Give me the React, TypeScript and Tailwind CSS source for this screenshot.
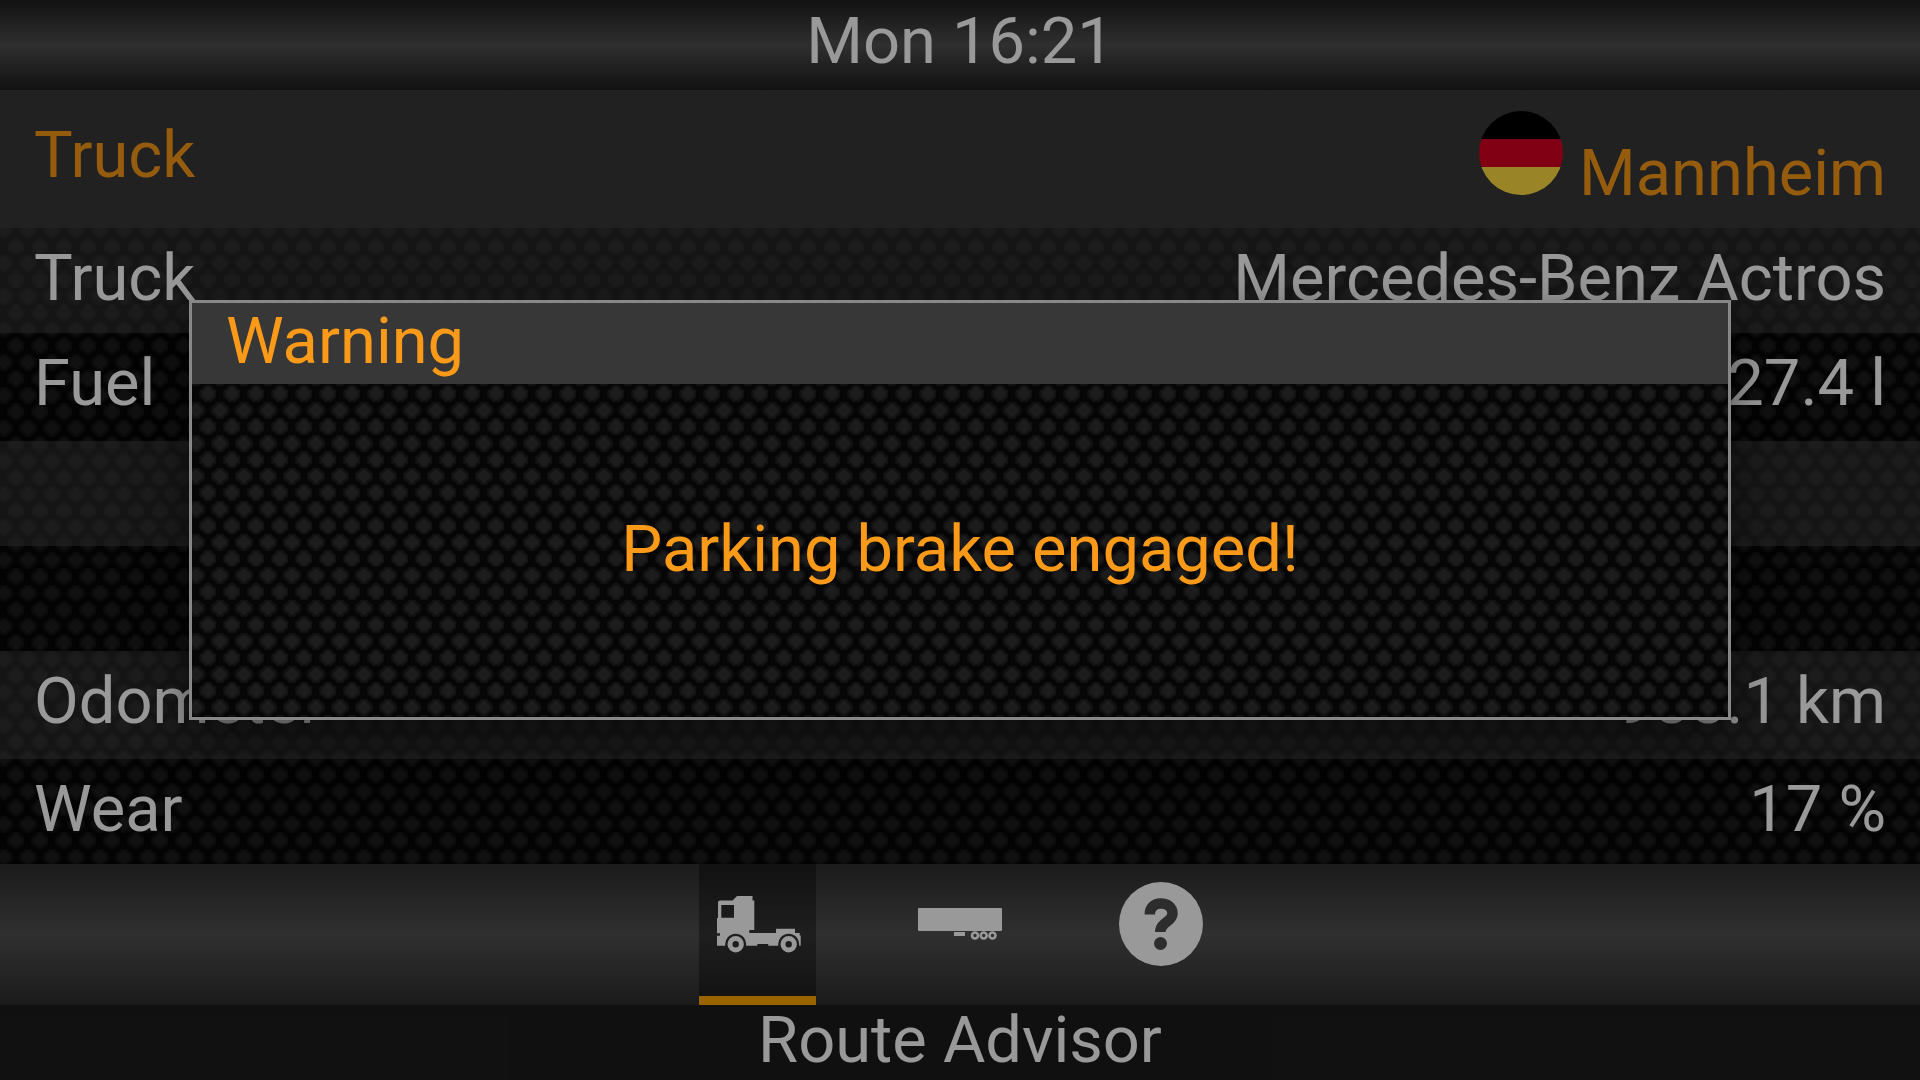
import React from "react";

const TILE =
  "bg-[url('data:image/svg+xml,%3Csvg%20xmlns=%22http://www.w3.org/2000/svg%22%20width=%2224%22%20height=%2233%22%3E%3Crect%20width=%2224%22%20height=%2233%22%20fill=%22%23060606%22/%3E%3Cg%20fill=%22%231c1c1c%22%20stroke=%22%23121212%22%20stroke-width=%222.500%22%20stroke-linejoin=%22round%22%3E%3Cpath%20id=%22d%22%20d=%22M2%200.75h4l2.500%203%203%202v5l-3%202-2.500%203h-4l-2.500-3-3-2v-5l3-2z%22/%3E%3Cuse%20href=%22%23d%22%20x=%2224%22/%3E%3Cuse%20href=%22%23d%22%20x=%2212%22%20y=%2216.5%22/%3E%3C/g%3E%3C/svg%3E')]";

type Row = { label: string; value: string; size: string };

const rows: Row[] = [
  { label: "Truck", value: "Mercedes-Benz Actros", size: "h-[105px]" },
  { label: "Fuel", value: "427.4 l", size: "h-[108px]" },
  { label: "", value: "", size: "h-[105px]" },
  { label: "", value: "", size: "h-[105px]" },
  { label: "Odometer", value: "988.1 km", size: "h-[108px]" },
  { label: "Wear", value: "17 %", size: "h-[105px]" },
];

function Flag() {
  return (
    <svg viewBox="0 0 84 84" className="size-[84px]" role="img" aria-label="Germany">
      <clipPath id="disc">
        <circle cx="42" cy="42" r="42" />
      </clipPath>
      <g clipPath="url(#disc)">
        <path fill="#000" d="M0 0h84v28H0z" />
        <path fill="#d80020" d="M0 28h84v28H0z" />
        <path fill="#ffdc44" d="M0 56h84v28H0z" />
      </g>
    </svg>
  );
}

function TruckIcon() {
  return (
    <svg viewBox="0 0 84 84" className="size-[84px]" fill="#fff" aria-hidden="true">
      <path
        fillRule="evenodd"
        d="M1 20.500q0-2 2-2h12.500l4.500-4.500h15.500v4.500h1.800V48h-5v3H59v-4.300h19V51h4.700v2.500h1V63.700H82.100A10.500 10.500 0 1 0 61.300 63.700H51.300V62h-11v1.700H29.100A10.500 10.500 0 1 0 8.300 63.700H0v-10h3v-2.400H0V36h1zM4.300 23v12.700H17V23z"
      />
      <path fillRule="evenodd" d="M18.700 54a8.200 8.200 0 1 1 0 16.400 8.200 8.200 0 0 1 0-16.400zm0 5a3.200 3.200 0 1 0 0 6.400 3.200 3.200 0 0 0 0-6.400z" />
      <path fillRule="evenodd" d="M71.700 54a8.200 8.200 0 1 1 0 16.400 8.200 8.200 0 0 1 0-16.400zm0 5a3.200 3.200 0 1 0 0 6.400 3.200 3.200 0 0 0 0-6.400z" />
    </svg>
  );
}

function TrailerIcon() {
  return (
    <svg viewBox="0 0 84 84" className="size-[84px]" fill="#fff" aria-hidden="true">
      <rect x="0" y="26" width="84" height="23" rx="1" />
      <rect x="36" y="50" width="11" height="4" />
      <g fill="none" stroke="#fff" strokeWidth="2.600">
        <circle cx="57" cy="53.500" r="3" />
        <circle cx="65.700" cy="53.500" r="3" />
        <circle cx="74.500" cy="53.500" r="3" />
      </g>
    </svg>
  );
}

function HelpIcon() {
  return (
    <svg viewBox="0 0 84 84" className="size-[84px]" aria-hidden="true">
      <circle cx="42" cy="42" r="42" fill="#fff" />
      <path
        fill="none"
        stroke="#4c4c4c"
        strokeWidth="10.500"
        d="M30.800 32.500c0-7 4.500-11 11-11s11.700 3.500 11.700 10c0 8.500-12.200 8.500-12.200 18.500"
      />
      <circle cx="41.500" cy="61.500" r="6.500" fill="#4c4c4c" />
    </svg>
  );
}

export default function App() {
  return (
    <div className="relative flex min-h-screen flex-col bg-[#1c1c1c] font-['Roboto',sans-serif] text-[65px] leading-[76px] text-white">
      <header className="h-[90px] bg-linear-to-b from-[#1f1f1f] via-[#505050] to-[#1d1d1d] pt-[3px] text-center">
        Mon 16:21
      </header>

      <main className={`grow ${TILE}`}>
        <div className="flex h-[138px] items-start justify-between bg-[#373737] px-[34px] text-[#fa9a18]">
          <h1 className="pt-[27px]">Truck</h1>
          <div className="flex items-start gap-4 pt-[21px]">
            <Flag />
            <span className="pt-6">Mannheim</span>
          </div>
        </div>
        <dl>
          {rows.map((row, i) => (
            <div
              key={i}
              className={`flex justify-between px-[34px] pt-3 ${row.size} ${i % 2 === 0 ? "bg-[#505050]/40" : ""}`}
            >
              <dt>{row.label}</dt>
              <dd>{row.value}</dd>
            </div>
          ))}
        </dl>
      </main>

      <nav className="flex h-[141px] justify-center gap-[84px] bg-linear-to-b from-[#2e2e2e] via-[#505050] to-[#2e2e2e] pr-[3px]">
        <button aria-label="Truck" className="flex w-[117px] border-b-9 border-[#ffa500] bg-black/35 pt-[18px] pl-[18px]">
          <TruckIcon />
        </button>
        <button aria-label="Trailer" className="flex w-[117px] pt-[18px] pl-[18px]">
          <TrailerIcon />
        </button>
        <button aria-label="Help" className="flex w-[117px] pt-[18px] pl-[18px]">
          <HelpIcon />
        </button>
      </nav>
      <footer className="h-[75px] text-center leading-[70px]">Route Advisor</footer>

      <div className="absolute inset-0 flex items-start justify-center bg-black/40 pt-[300px]">
        <section
          role="alertdialog"
          aria-labelledby="warning-title"
          aria-describedby="warning-text"
          className={`flex h-[420px] w-[1542px] max-w-full flex-col border-3 border-[#888] text-[#fa9a18] shadow-[0_16px_40px_rgba(0,0,0,0.5)] ${TILE}`}
        >
          <h2 id="warning-title" className="h-[81px] bg-[#373737] px-[34px]">
            Warning
          </h2>
          <p id="warning-text" className="flex grow items-center justify-center pb-1">
            Parking brake engaged!
          </p>
        </section>
      </div>
    </div>
  );
}
